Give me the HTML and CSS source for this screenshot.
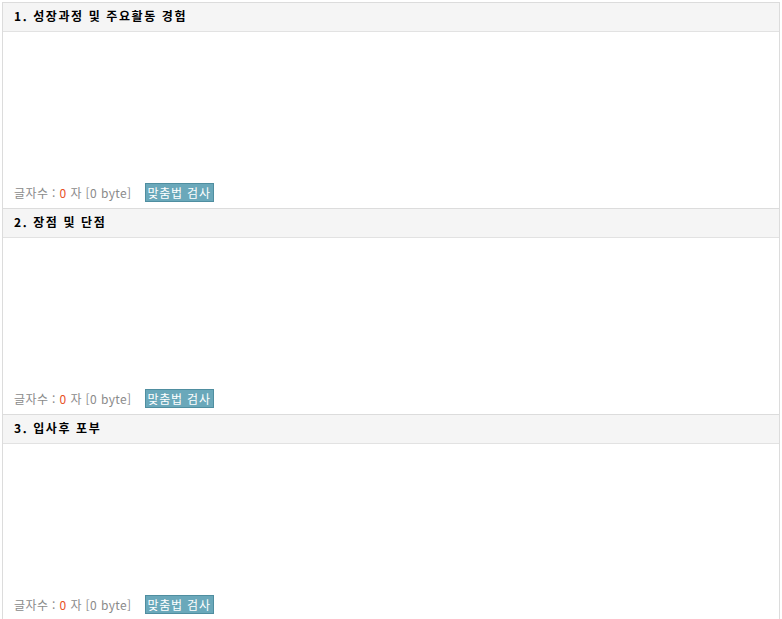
FILE: index.html
```html
<!DOCTYPE html>
<html lang="ko">
<head>
<meta charset="utf-8">
<link rel="stylesheet" href="styles.css">
</head>
<body>
<div class="wrap">
  <div class="item">
    <div class="head">1. 성장과정 및 주요활동 경험</div>
    <div class="body">
      <div class="area"></div>
      <div class="foot"><span class="cnt">글자수 : <em>0</em> 자 [0 byte]</span><button class="spell">맞춤법 검사</button></div>
    </div>
  </div>
  <div class="item">
    <div class="head">2. 장점 및 단점</div>
    <div class="body">
      <div class="area"></div>
      <div class="foot"><span class="cnt">글자수 : <em>0</em> 자 [0 byte]</span><button class="spell">맞춤법 검사</button></div>
    </div>
  </div>
  <div class="item">
    <div class="head">3. 입사후 포부</div>
    <div class="body">
      <div class="area"></div>
      <div class="foot"><span class="cnt">글자수 : <em>0</em> 자 [0 byte]</span><button class="spell">맞춤법 검사</button></div>
    </div>
  </div>
</div>
</body>
</html>
```
FILE: styles.css
```css
html, body {
  margin: 0;
  padding: 0;
  background: #fff;
}
body {
  padding: 2px 0 0 2px;
  font-family: "Noto Sans CJK KR", "Noto Sans", sans-serif;
  font-size: 12px;
}
.wrap {
  width: 778px;
  box-sizing: border-box;
  border-left: 1px solid #dcdcdc;
  border-right: 1px solid #dcdcdc;
}
.item {
  border-top: 1px solid #dcdcdc;
}
.head {
  height: 29px;
  box-sizing: border-box;
  background: #f5f5f5;
  border-bottom: 1px solid #e2e2e2;
  padding: 5px 0 0 11px;
  line-height: 16px;
  font-weight: bold;
  color: #000;
  font-size: 12px;
  letter-spacing: 1.6px;
}
.body {
  height: 176px;
  display: flex;
  flex-direction: column;
}
.area {
  flex: 1;
}
.foot {
  display: flex;
  align-items: center;
  padding: 0 0 6px 11px;
}
.cnt {
  color: #8a8a8a;
  font-size: 12px;
  line-height: 19px;
  letter-spacing: 0.4px;
}
.cnt em {
  font-style: normal;
  color: #e8501e;
}
.spell {
  margin-left: 13px;
  height: 19px;
  width: 69px;
  padding: 0;
  box-sizing: border-box;
  background: #6aa8ba;
  border: 1px solid #4f8ea0;
  color: #fff;
  font-family: "Noto Sans CJK KR", "Noto Sans", sans-serif;
  font-size: 12px;
  line-height: 16px;
  letter-spacing: 0.8px;
  cursor: pointer;
}
```
